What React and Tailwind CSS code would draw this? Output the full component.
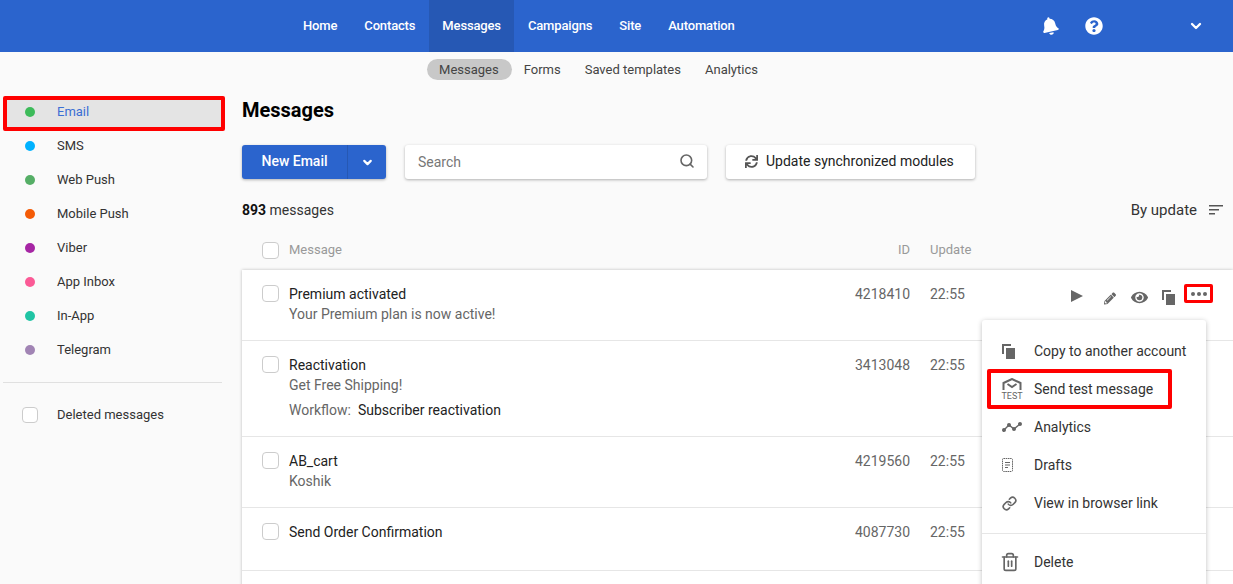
import React from 'react';
import { ChevronDown, Search, Trash2, Link } from 'lucide-react';
import { FaBell, FaQuestionCircle, FaSync, FaPencilAlt, FaEye } from 'react-icons/fa';

const NAV = ['Home', 'Contacts', 'Messages', 'Campaigns', 'Site', 'Automation'];
const SUBNAV = ['Messages', 'Forms', 'Saved templates', 'Analytics'];
const CHANNELS = [
  ['Email', 'bg-[#3dbb5a]'],
  ['SMS', 'bg-[#00b2ff]'],
  ['Web Push', 'bg-[#55ae66]'],
  ['Mobile Push', 'bg-[#f45b06]'],
  ['Viber', 'bg-[#a626a4]'],
  ['App Inbox', 'bg-[#fb5a96]'],
  ['In-App', 'bg-[#20c4a4]'],
  ['Telegram', 'bg-[#a184b4]'],
];
const ROWS = [
  { title: 'Premium activated', sub: 'Your Premium plan is now active!', id: '4218410', h: 'h-[71px]' },
  { title: 'Reactivation', sub: 'Get Free Shipping!', id: '3413048', h: 'h-[96px]', workflow: 'Subscriber reactivation' },
  { title: 'AB_cart', sub: 'Koshik', id: '4219560', h: 'h-[71px]' },
  { title: 'Send Order Confirmation', id: '4087730', h: 'h-[63px]' },
  { title: '', id: '', h: 'h-[40px]' },
];

function CopyIcon({ className }) {
  return (
    <svg viewBox="0 0 13 15" className={className} fill="currentColor">
      <path d="M0 0h9v2H2v8H0z" />
      <rect x="4" y="4" width="9" height="11" />
    </svg>
  );
}

function TestIcon() {
  return (
    <div className="flex w-5 flex-col items-center text-[#666]">
      <svg viewBox="0 0 20 12" className="h-3 w-5" fill="none" stroke="currentColor" strokeWidth="2">
        <path d="M1.500 12V5L10 1l8.500 4v7" />
        <path d="M5.500 6L10 9l4.500-3" />
      </svg>
      <span className="mt-[2px] text-[9px] leading-[8px]">TEST</span>
    </div>
  );
}

function AnalyticsIcon() {
  return (
    <svg viewBox="0 0 20 10" className="h-[10px] w-5 text-[#666]" fill="none" stroke="currentColor" strokeWidth="1.400">
      <path d="M2 8l5-5 5 4 6-5" />
      <circle cx="2" cy="8" r="1.300" fill="currentColor" />
      <circle cx="7" cy="3" r="1.300" fill="currentColor" />
      <circle cx="12" cy="7" r="1.300" fill="currentColor" />
      <circle cx="18" cy="2" r="1.300" fill="currentColor" />
    </svg>
  );
}

function DraftsIcon() {
  return (
    <svg viewBox="0 0 11 14" className="h-[14px] w-[11px] text-[#666]" fill="none" stroke="currentColor" strokeWidth="1">
      <path d="M1.500.500h8a1 1 0 0 1 1 1v11a1 1 0 0 1-1 1h-8a1 1 0 0 1-1-1v-11a1 1 0 0 1 1-1z" strokeDasharray="1.600 .6" />
      <path d="M3 4.500h5M3 7h5M3 9.500h3" />
    </svg>
  );
}

function Checkbox({ className = 'h-[17px] w-[17px]' }) {
  return <div className={`shrink-0 rounded-[4px] border border-[#ccc] bg-white ${className}`} />;
}

function MessageRow({ row, first }) {
  return (
    <div className={`flex border-b border-[#e6e6e6] pl-5 ${row.h}`}>
      {row.title && (
        <>
          <Checkbox className="mt-[15px] h-[17px] w-[17px]" />
          <div className="ml-[10px] w-[546px] pt-[14px]">
            <div className="text-[14px] leading-5 text-[#222]">{row.title}</div>
            {row.sub && <div className="text-[14px] leading-5 text-[#666]">{row.sub}</div>}
            {row.workflow && (
              <div className="mt-[5px] text-[14px] leading-5 text-[#666]">
                Workflow:<span className="ml-[7px] text-[#222]">{row.workflow}</span>
              </div>
            )}
          </div>
          <div className="w-[75px] pt-[14px] text-right text-[14px] leading-5 text-[#666]">{row.id}</div>
          <div className="ml-[20px] pt-[14px] text-[14px] leading-5 text-[#666]">22:55</div>
        </>
      )}
      {first && (
        <div className="ml-auto mr-[58px] flex items-center self-start pt-[19px] text-[#666]">
          <svg viewBox="0 0 12 12" className="-mt-[3px] h-3 w-3" fill="currentColor">
            <path d="M0 0l12 6-12 6z" />
          </svg>
          <FaPencilAlt className="ml-[21px] mt-[2px] h-[15px] w-[12px]" />
          <FaEye className="ml-[15px] h-[17px] w-[17px]" />
          <CopyIcon className="ml-[14px] h-[15px] w-[13px]" />
        </div>
      )}
    </div>
  );
}

function MenuItem({ icon, label, outlined }) {
  return (
    <div className={`flex h-[38px] items-center pl-[20px] ${outlined ? 'relative' : ''}`}>
      <div className="flex w-[32px] shrink-0 items-center">{icon}</div>
      <span className="text-[14px] text-[#333]">{label}</span>
      {outlined && (
        <div className="absolute -top-[1px] left-[5px] h-[40px] w-[185px] rounded-[2px] border-[4px] border-[#ff0000]" />
      )}
    </div>
  );
}

export default function App() {
  return (
    <div className="h-[584px] w-[1233px] overflow-hidden bg-[#fafafa] font-['Roboto',sans-serif]">
      <header className="flex h-[52px] bg-[#2b64cd] text-white">
        <nav className="ml-[289.5px] flex">
          {NAV.map((item) => (
            <div
              key={item}
              className={`flex h-[52px] items-center px-[13.5px] pb-[1px] text-[13px] font-medium tracking-[-0.15px] ${
                item === 'Messages' ? 'bg-[#2658b4]' : ''
              }`}
            >
              {item}
            </div>
          ))}
        </nav>
        <div className="ml-auto flex items-center pb-[1px]">
          <FaBell className="h-[18px] w-[18px] -rotate-12" />
          <FaQuestionCircle className="ml-[26px] h-[18px] w-[18px]" />
          <ChevronDown className="ml-[85px] mr-[29px] h-[16px] w-[16px]" strokeWidth={3.5} />
        </div>
      </header>

      <div className="flex h-[36px] items-center justify-center pb-[2px] pr-[36px] text-[13px] text-[#444]">
        {SUBNAV.map((item, i) => (
          <div
            key={item}
            className={`rounded-full py-[2px] pl-3 leading-[17px] ${i === 0 ? 'bg-[#c8c8c8] pr-[13px]' : 'pr-3'}`}
          >
            {item}
          </div>
        ))}
      </div>

      <div className="flex">
        <aside className="w-[242px] shrink-0 pl-[3px] pr-[20px] pt-[8px]">
          {CHANNELS.map(([name, color], i) => (
            <div
              key={name}
              className={
                i === 0
                  ? '-mb-[2px] -mr-[3px] flex h-[35px] items-center rounded-[2px] border-[4px] border-[#ff0000] bg-[#e4e4e4] pb-[3px] pl-[18px]'
                  : 'flex h-[34px] items-center pl-[22px]'
              }
            >
              <span className={`h-[10px] w-[10px] rounded-full ${color}`} />
              <span className={`ml-[22px] text-[13px] ${i === 0 ? 'text-[#3b6fd4]' : 'text-[#333]'}`}>{name}</span>
            </div>
          ))}
          <div className="mt-[15px] border-t border-[#e0e0e0] pl-[19px] pt-[22px]">
            <div className="flex items-center">
              <Checkbox className="h-[16px] w-[16px]" />
              <span className="ml-[19px] text-[13px] text-[#333]">Deleted messages</span>
            </div>
          </div>
        </aside>

        <main className="min-w-0 flex-1">
          <h1 className="pt-[8px] text-[20px] font-bold leading-[28px] text-black">Messages</h1>

          <div className="mt-[21px] flex gap-[19px]">
            <div className="flex h-[34px] w-[144px] rounded-[3px] bg-[#2b64cd] text-white shadow-[0_1px_3px_rgba(0,0,0,0.3)]">
              <div className="flex flex-1 items-center justify-center border-r border-[#2658b4] pb-[2px] text-[14px] font-medium">
                New Email
              </div>
              <div className="flex w-[38px] items-center justify-center">
                <ChevronDown className="h-[13px] w-[13px]" strokeWidth={4} />
              </div>
            </div>
            <div className="flex h-[34px] w-[302px] items-center justify-between rounded-[3px] bg-white pl-[13px] pr-[12px] shadow-[0_1px_3px_rgba(0,0,0,0.3)]">
              <span className="text-[14px] text-[#777]">Search</span>
              <Search className="mb-[3px] h-4 w-4 text-[#666]" strokeWidth={2.4} />
            </div>
            <div className="flex h-[34px] w-[249px] items-center rounded-[3px] bg-white pb-[2px] pl-[19px] shadow-[0_1px_3px_rgba(0,0,0,0.3)]">
              <FaSync className="h-[13px] w-[13px] text-[#555]" />
              <span className="ml-[8px] text-[14px] text-[#222]">Update synchronized modules</span>
            </div>
          </div>

          <div className="mt-[20px] flex h-[22px] items-center justify-between pr-[10px]">
            <div className="text-[14px] text-[#333]">
              <span className="font-bold text-[#111]">893</span> messages
            </div>
            <div className="flex items-center text-[15px] text-[#333]">
              By update
              <svg viewBox="0 0 14 10" className="ml-[12px] h-[10px] w-[14px]" fill="#555">
                <rect width="14" height="1.500" />
                <rect y="4" width="10" height="1.500" />
                <rect y="8" width="6" height="1.500" />
              </svg>
            </div>
          </div>

          <div className="mt-[19px] flex h-[20px] items-center pl-5 text-[13px] text-[#999]">
            <Checkbox className="h-[17px] w-[17px]" />
            <span className="ml-[10px] w-[546px]">Message</span>
            <span className="w-[75px] text-right">ID</span>
            <span className="ml-[20px]">Update</span>
          </div>

          <div className="relative mt-[10px] bg-white shadow-[0_0_3px_rgba(0,0,0,0.25)]">
            {ROWS.map((row, i) => (
              <MessageRow key={i} row={row} first={i === 0} />
            ))}
            <div className="absolute right-[20px] top-[14px] flex h-[19px] w-[29px] items-center justify-center gap-[2px] rounded-[2px] border-[3px] border-[#ff0000] bg-white">
              <span className="h-[4px] w-[4px] rounded-full bg-[#666]" />
              <span className="h-[4px] w-[4px] rounded-full bg-[#666]" />
              <span className="h-[4px] w-[4px] rounded-full bg-[#666]" />
            </div>
            <div className="absolute left-[740px] top-[50px] h-[300px] w-[224px] rounded-[3px] bg-white pt-[12px] shadow-[0_1px_5px_rgba(0,0,0,0.25)]">
              <MenuItem icon={<CopyIcon className="h-[15px] w-[13px] text-[#666]" />} label="Copy to another account" />
              <MenuItem icon={<TestIcon />} label="Send test message" outlined />
              <MenuItem icon={<AnalyticsIcon />} label="Analytics" />
              <MenuItem icon={<DraftsIcon />} label="Drafts" />
              <MenuItem icon={<Link className="h-[15px] w-[15px] text-[#666]" strokeWidth={2.6} />} label="View in browser link" />
              <div className="mt-[11px] border-t border-[#e6e6e6] pt-[9px]">
                <MenuItem icon={<Trash2 className="-ml-[2px] h-5 w-5 text-[#666]" strokeWidth={2} />} label="Delete" />
              </div>
            </div>
          </div>
        </main>
      </div>
    </div>
  );
}
